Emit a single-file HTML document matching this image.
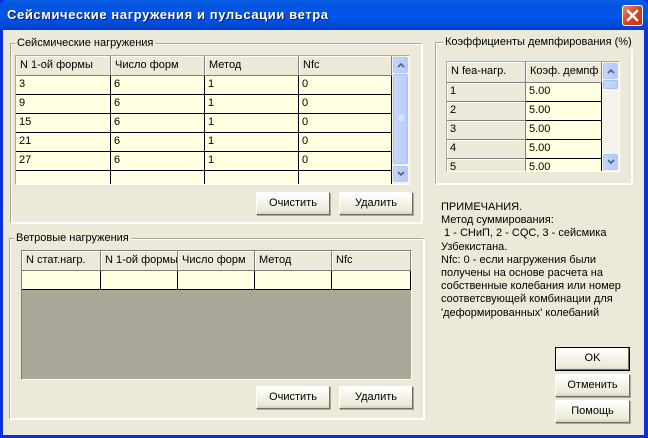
<!DOCTYPE html>
<html><head><meta charset="utf-8"><style>
*{box-sizing:border-box;margin:0;padding:0}
body{width:648px;height:438px;overflow:hidden;background:#0831d9;font-family:Tahoma,"Liberation Sans","DejaVu Sans",sans-serif;font-size:11px;color:#000;position:relative}
.a{position:absolute}
#title{left:0;top:0;width:648px;height:30px;background:linear-gradient(#0a5fe6,#0254e0 20%,#0055ea 60%,#0040c8);border-radius:7px 7px 0 0}
#title span{position:absolute;left:7px;top:7px;color:#fff;font-weight:bold;font-size:13px;letter-spacing:0.6px;text-shadow:1px 1px #0a1e6e}
#close{left:622px;top:5px;width:21px;height:21px;background:linear-gradient(135deg,#e88a70,#d9411e 50%,#c2331a);border:1px solid #fff;border-radius:3px}
#body{left:3px;top:30px;width:641px;height:405px;background:#ece9d8}
.grp{position:absolute;border:1px solid #d0d0bf;box-shadow:inset 1px 1px #fff,1px 1px #fff;border-color:#aca899 #fff #fff #aca899}
.lbl{position:absolute;background:#ece9d8;padding:0 2px;font-size:11px;line-height:13px;color:#000}
.grid{position:absolute;background:#fff;border:1px solid #7f9db9}
.c{position:absolute;border-right:1px solid #000;border-bottom:1px solid #000;padding:2px 3px;font-size:11px;line-height:13px;background:#ffffe1;white-space:nowrap;overflow:hidden}
.h{background:#ece9d8;border-right:1px solid #808080;border-bottom:1px solid #808080;box-shadow:inset 1px 1px #fff;padding:3px 4px}
.g{background:#ece9d8;border-right:1px solid #808080;border-bottom:1px solid #808080;box-shadow:inset 1px 1px #fff}
.btn{position:absolute;border:1px solid #003c74;background:linear-gradient(#fff,#ece9d8 85%,#d6d0c5);text-align:center;font-size:11px;line-height:20px;border-color:#fff #716f64 #716f64 #fff;box-shadow:1px 1px #aca899}
.sb{position:absolute;background:#f4f3ee}
.sbb{position:absolute;left:1px;width:15px;height:16px;background:linear-gradient(90deg,#c5d6fc,#b4c8f6);border:1px solid #b6c9f4;border-radius:2px}
.sbb svg{position:absolute;left:3px;top:4px}
.thumb{position:absolute;left:1px;width:15px;background:linear-gradient(90deg,#c9d8fc,#b8cdf8);border:1px solid #a8bff1;border-radius:2px}
.note{left:441px;top:201px;font-size:11px;line-height:13.2px}
</style></head><body>
<div id="title" class="a"><span>Сейсмические нагружения и пульсации ветра</span></div>
<div id="close" class="a"><svg width="19" height="19" viewBox="0 0 19 19"><path d="M5 5L14 14M14 5L5 14" stroke="#fff" stroke-width="2.4" stroke-linecap="square"/></svg></div>
<div id="body" class="a"></div>

<div class="grp" style="left:10px;top:43px;width:412px;height:180px"></div>
<div class="lbl" style="left:15px;top:37px">Сейсмические нагружения</div>
<div class="grid" style="left:15px;top:55px;width:395px;height:130px;overflow:hidden;border-color:#aca899 #fff #fff #aca899">
<div class="c h" style="left:0;top:0;width:95px;height:20px">N 1-ой формы</div>
<div class="c h" style="left:95px;top:0;width:94px;height:20px">Число форм</div>
<div class="c h" style="left:189px;top:0;width:94px;height:20px">Метод</div>
<div class="c h" style="left:283px;top:0;width:93px;height:20px">Nfc</div>
<div class="c" style="left:0;top:20px;width:95px;height:19px">3</div><div class="c" style="left:95px;top:20px;width:94px;height:19px">6</div><div class="c" style="left:189px;top:20px;width:94px;height:19px">1</div><div class="c" style="left:283px;top:20px;width:93px;height:19px">0</div>
<div class="c" style="left:0;top:39px;width:95px;height:19px">9</div><div class="c" style="left:95px;top:39px;width:94px;height:19px">6</div><div class="c" style="left:189px;top:39px;width:94px;height:19px">1</div><div class="c" style="left:283px;top:39px;width:93px;height:19px">0</div>
<div class="c" style="left:0;top:58px;width:95px;height:19px">15</div><div class="c" style="left:95px;top:58px;width:94px;height:19px">6</div><div class="c" style="left:189px;top:58px;width:94px;height:19px">1</div><div class="c" style="left:283px;top:58px;width:93px;height:19px">0</div>
<div class="c" style="left:0;top:77px;width:95px;height:19px">21</div><div class="c" style="left:95px;top:77px;width:94px;height:19px">6</div><div class="c" style="left:189px;top:77px;width:94px;height:19px">1</div><div class="c" style="left:283px;top:77px;width:93px;height:19px">0</div>
<div class="c" style="left:0;top:96px;width:95px;height:19px">27</div><div class="c" style="left:95px;top:96px;width:94px;height:19px">6</div><div class="c" style="left:189px;top:96px;width:94px;height:19px">1</div><div class="c" style="left:283px;top:96px;width:93px;height:19px">0</div>
<div class="c" style="left:0;top:115px;width:95px;height:19px"></div><div class="c" style="left:95px;top:115px;width:94px;height:19px"></div><div class="c" style="left:189px;top:115px;width:94px;height:19px"></div><div class="c" style="left:283px;top:115px;width:93px;height:19px"></div>
<div class="sb" style="left:376px;top:0;width:17px;height:128px">
<div class="sbb" style="top:1px"><svg width="8" height="6"><path d="M1 5L4 2L7 5" stroke="#4d6185" stroke-width="1.6" fill="none"/></svg></div>
<div class="thumb" style="top:18px;height:90px"><svg style="position:absolute;left:4px;top:40px" width="6" height="7"><path d="M0 1H6M0 3H6M0 5H6" stroke="#eef2ff" stroke-width="1"/></svg></div>
<div class="sbb" style="top:110px"><svg width="8" height="6"><path d="M1 1L4 4L7 1" stroke="#4d6185" stroke-width="1.6" fill="none"/></svg></div></div>
</div>
<div class="btn" style="left:256px;top:192px;width:74px;height:23px">Очистить</div>
<div class="btn" style="left:339px;top:192px;width:74px;height:23px">Удалить</div>

<div class="grp" style="left:435px;top:42px;width:197px;height:142px"></div>
<div class="lbl" style="left:443px;top:36px">Коэффициенты демпфирования (%)</div>
<div class="grid" style="left:446px;top:61px;width:174px;height:111px;overflow:hidden;border-color:#aca899 #fff #fff #aca899">
<div class="c h" style="left:0;top:0;width:79px;height:21px">N fea-нагр.</div>
<div class="c h" style="left:79px;top:0;width:76px;height:21px">Коэф. демпф</div>
<div class="c g" style="left:0;top:21px;width:79px;height:19px">1</div><div class="c" style="left:79px;top:21px;width:76px;height:19px">5.00</div>
<div class="c g" style="left:0;top:40px;width:79px;height:19px">2</div><div class="c" style="left:79px;top:40px;width:76px;height:19px">5.00</div>
<div class="c g" style="left:0;top:59px;width:79px;height:19px">3</div><div class="c" style="left:79px;top:59px;width:76px;height:19px">5.00</div>
<div class="c g" style="left:0;top:78px;width:79px;height:19px">4</div><div class="c" style="left:79px;top:78px;width:76px;height:19px">5.00</div>
<div class="c g" style="left:0;top:97px;width:79px;height:19px">5</div><div class="c" style="left:79px;top:97px;width:76px;height:19px">5.00</div>
<div class="sb" style="left:155px;top:0;width:17px;height:109px">
<div class="sbb" style="top:1px"><svg width="8" height="6"><path d="M1 5L4 2L7 5" stroke="#4d6185" stroke-width="1.6" fill="none"/></svg></div>
<div class="thumb" style="top:18px;height:9px"></div>
<div class="sbb" style="top:92px"><svg width="8" height="6"><path d="M1 1L4 4L7 1" stroke="#4d6185" stroke-width="1.6" fill="none"/></svg></div></div>
</div>

<div class="a note">ПРИМЕЧАНИЯ.<br>Метод суммирования:<br>&nbsp;1 - СНиП, 2 - CQC, 3 - сейсмика<br>Узбекистана.<br>Nfc: 0 - если нагружения были<br>получены на основе расчета на<br>собственные колебания или номер<br>соответсвующей комбинации для<br>'деформированных' колебаний</div>

<div class="grp" style="left:9px;top:238px;width:415px;height:181px"></div>
<div class="lbl" style="left:14px;top:232px">Ветровые нагружения</div>
<div class="grid" style="left:21px;top:250px;width:391px;height:130px;background:#aba899;overflow:hidden;border-color:#808080 #fff #fff #808080">
<div class="c h" style="left:0;top:0;width:79px;height:20px">N стат.нагр.</div>
<div class="c h" style="left:79px;top:0;width:77px;height:20px">N 1-ой формы</div>
<div class="c h" style="left:156px;top:0;width:77px;height:20px">Число форм</div>
<div class="c h" style="left:233px;top:0;width:77px;height:20px">Метод</div>
<div class="c h" style="left:310px;top:0;width:79px;height:20px">Nfc</div>
<div class="c" style="left:0;top:20px;width:79px;height:19px"></div><div class="c" style="left:79px;top:20px;width:77px;height:19px"></div><div class="c" style="left:156px;top:20px;width:77px;height:19px"></div><div class="c" style="left:233px;top:20px;width:77px;height:19px"></div><div class="c" style="left:310px;top:20px;width:79px;height:19px"></div>
</div>
<div class="btn" style="left:256px;top:386px;width:74px;height:23px">Очистить</div>
<div class="btn" style="left:339px;top:386px;width:74px;height:23px">Удалить</div>

<div class="btn" style="left:555px;top:347px;width:75px;height:24px;border:1px solid #000;box-shadow:inset -1px -1px #716f64,inset 1px 1px #fff">OK</div>
<div class="btn" style="left:555px;top:374px;width:75px;height:23px">Отменить</div>
<div class="btn" style="left:555px;top:400px;width:75px;height:23px">Помощь</div>
</body></html>
